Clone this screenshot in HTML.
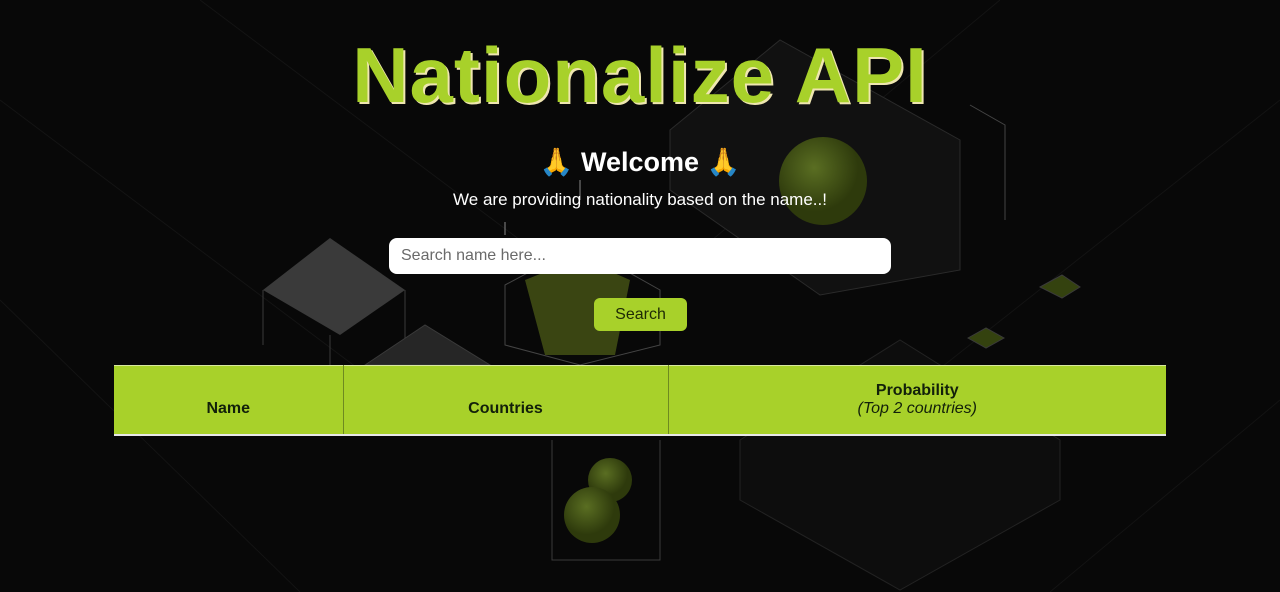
<!DOCTYPE html>
<html><head><meta charset="utf-8"><style>
*{margin:0;padding:0;box-sizing:border-box}
body{width:1280px;height:592px;background:#080808;overflow:hidden;position:relative;font-family:"Liberation Sans",sans-serif}
.abs{position:absolute}
h1{position:absolute;left:0;width:1280px;top:30px;text-align:center;font-size:78px;font-weight:bold;color:#a8d12a;text-shadow:2px 2px 0 #efe6b0;letter-spacing:1px}
.wel{top:146px;width:1280px;text-align:center;color:#fff;font-size:27px;font-weight:bold}
.sub{top:190px;width:1280px;text-align:center;color:#fff;font-size:17px}
.inp{left:389px;top:238px;width:502px;height:36px;background:#fff;border-radius:8px;color:#6a6a6a;font-size:16px;padding:9px 12px}
.btn{left:594px;top:298px;width:93px;height:33px;background:#a8d12a;border-radius:6px;color:#1e2a05;font-size:16px;text-align:center;line-height:33px}
table{position:absolute;left:114px;top:365px;width:1052px;height:71px;border-collapse:collapse;background:#a8d12a;border-bottom:2px solid #e8e8e8;border-top:1px solid #d8e8a0}
td{border-left:1px solid #6e8a20;color:#12200a;font-weight:bold;font-size:16px;text-align:center;vertical-align:bottom;padding-bottom:16px}
td:first-child{border-left:none}
</style></head><body>
<svg class="abs" style="left:0;top:0" width="1280" height="592">
<defs><radialGradient id="g" cx="40%" cy="35%"><stop offset="0" stop-color="#5a6e22"/><stop offset="1" stop-color="#2e3a0c"/></radialGradient></defs>
<g stroke="#131313" stroke-width="1" fill="none">
<path d="M0 100 L400 400 M0 300 L300 592 M1280 100 L900 400 M1280 400 L1050 592 M200 0 L600 300 M1000 0 L700 250"/>
</g>
<path d="M670 130 L780 40 L960 140 L960 270 L820 295 L670 190Z" fill="#111" stroke="#2a2a2a"/>
<path d="M970 105 L1005 125 L1005 220" stroke="#444" fill="none"/>
<circle cx="823" cy="181" r="44" fill="url(#g)"/>
<path d="M263 290 L330 238 L405 290 L340 335Z" fill="#3a3a3a"/>
<path d="M263 290 L263 345 M405 290 L405 345 M330 335 L330 365" stroke="#3a3a3a"/>
<path d="M365 365 L425 325 L490 365Z" fill="#262626" stroke="#3a3a3a"/>
<path d="M505 285 L580 245 L660 290 L660 345 L580 365 L505 345Z" fill="none" stroke="#444"/>
<path d="M525 280 L580 258 L630 280 L615 355 L545 355Z" fill="#3a4512"/>
<path d="M552 440 L552 560 L660 560 L660 440" fill="none" stroke="#3a3a3a"/>
<circle cx="610" cy="480" r="22" fill="url(#g)"/>
<circle cx="592" cy="515" r="28" fill="url(#g)"/>
<path d="M740 440 L900 340 L1060 440 L1060 500 L900 590 L740 500Z" fill="#0d0d0d" stroke="#222"/>
<path d="M1040 287 L1062 275 L1080 287 L1062 298Z M968 338 L986 328 L1004 338 L986 348Z" fill="#34420f" stroke="#3a3a3a"/>
<path d="M580 200 L580 180 M505 235 L505 222" stroke="#888"/>
</svg>
<h1>Nationalize API</h1>
<div class="abs wel">🙏 Welcome 🙏</div>
<div class="abs sub">We are providing nationality based on the name..!</div>
<div class="abs inp">Search name here...</div>
<div class="abs btn">Search</div>
<table><tr><td style="width:229px">Name</td><td style="width:325px">Countries</td><td>Probability<br><i style="font-weight:normal">(Top 2 countries)</i></td></tr></table>
</body></html>
